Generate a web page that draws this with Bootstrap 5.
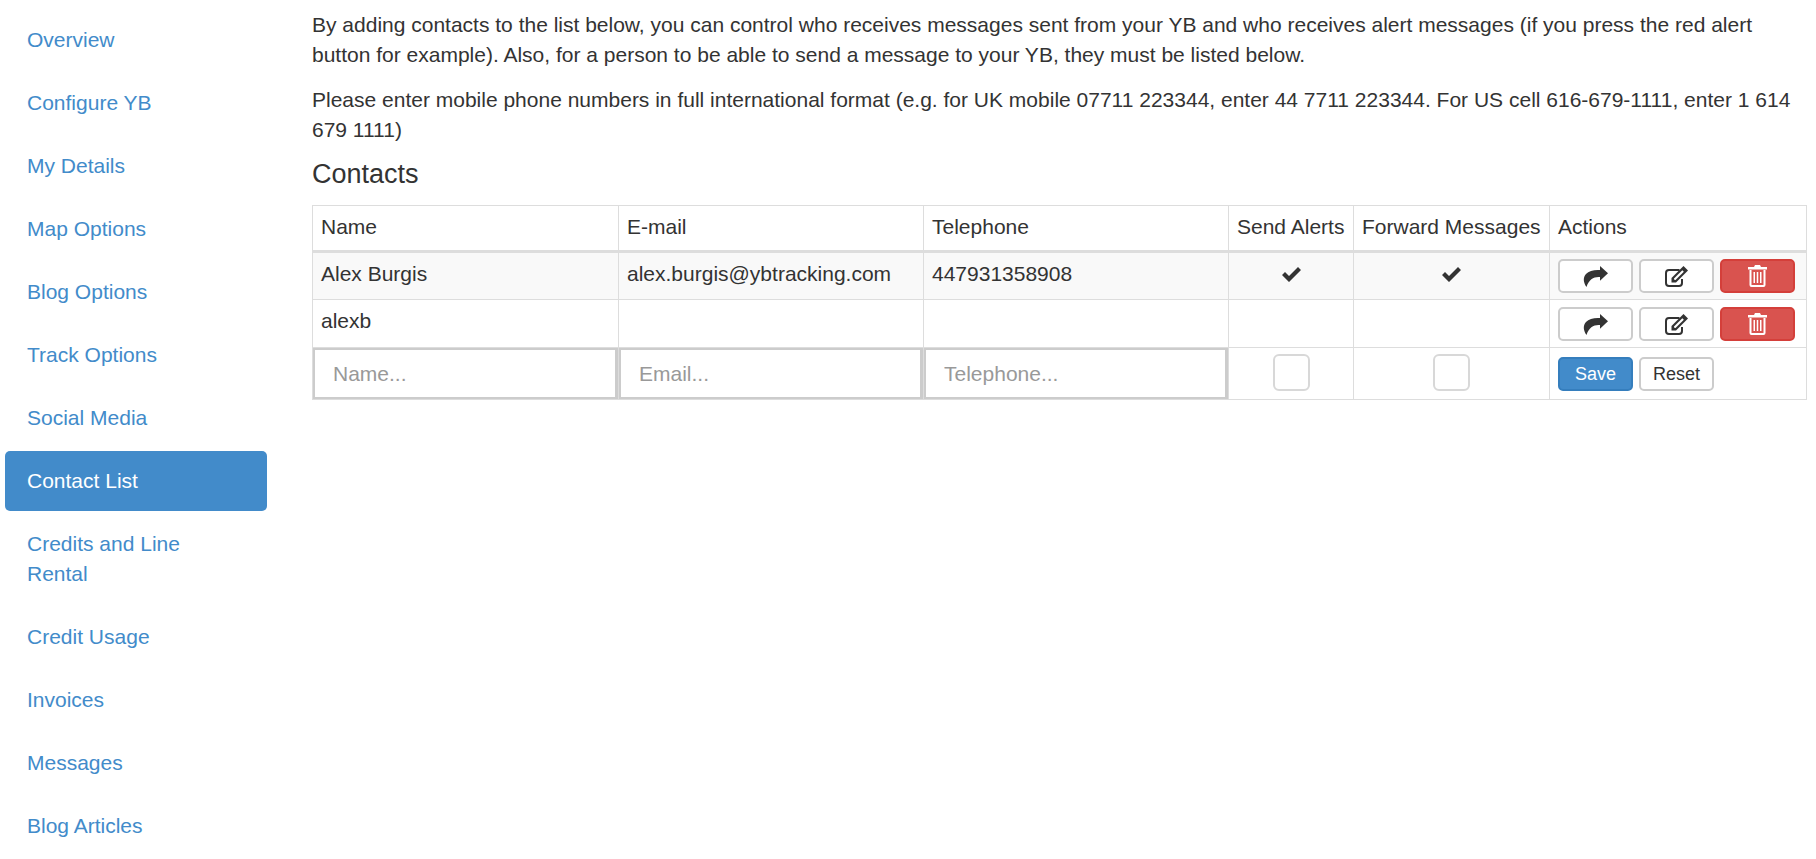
<!doctype html>
<html lang="en">
<head>
<meta charset="utf-8">
<title>Contact List</title>
<link rel="stylesheet" href="https://cdn.jsdelivr.net/npm/bootstrap@5.3.0/dist/css/bootstrap.min.css">
<style>
html,body{height:859px;overflow:hidden}
body{font-family:"Liberation Sans",Arial,sans-serif;font-size:21px;line-height:30px;color:#333;background:#fff}
.shell{display:flex;align-items:flex-start;padding:0 10px 0 5px}
.side{width:262px;flex:none;padding-top:10px}
.side .nav-link{color:#428bca;font-size:21px;line-height:30px;padding:15px 22px;border-radius:5px;margin-bottom:3px}
.side .nav-link.active{background:#428bca;color:#fff}
.content{margin-left:45px;width:1494px;padding-top:10px}
.content p{margin:0 0 15px}
.content h3{font-size:27px;line-height:30px;font-weight:400;margin:-1px 0 16px}
.ctable{width:1494px;table-layout:fixed;border-collapse:collapse;margin:0;color:#333}
.ctable th,.ctable td{border:1px solid #ddd;padding:9px 8px 6px;font-weight:400;line-height:24px;background:transparent;box-shadow:none;white-space:nowrap;vertical-align:top}
.ctable thead th{height:46px;border-bottom:3px solid #ddd;padding:9px 8px}
.ctable tbody tr.rowa td{height:48px;background:#f9f9f9}
.ctable tbody tr.rowb td{height:48px}
.ctable td.mid{text-align:center;padding-top:8px}
.ctable td.mid svg{vertical-align:middle}
.ctable td.acts{padding:6px 8px}
.ctable td.acts.low{padding-top:7px;vertical-align:middle}
.ctable td.inp{padding:0}
.ctable td.frm{padding:4px 8px 7px;vertical-align:middle}
.fld{display:block;width:calc(100% + 1px);height:53px;margin:-1px 0 -1px -1px;border:3px solid #ccc;padding:0 18px;font-size:21px;color:#333;outline:0;background:#fff}
.fld::placeholder{color:#999;opacity:1}
.tick{display:block;width:37px;height:37px;margin:0 auto;border:2px solid #d8d8d8;border-radius:6px;background:#fff;appearance:none}
.bt{width:75px;height:34px;padding:0;border:2px solid #ccc;border-radius:5px;background:#fff;color:#333;font-size:18px;line-height:28px;display:inline-flex;align-items:center;justify-content:center}
.bt.del{background:#d9534f;border-color:#d43f3a}
.bt.sv{background:#428bca;border-color:#357ebd;color:#fff}
.acts-row{display:flex;gap:6px}
.c1{width:306px}.c2{width:305px}.c3{width:305px}.c4{width:125px}.c5{width:196px}.c6{width:257px}
</style>
</head>
<body>
<div class="shell">
<nav class="side nav flex-column">
<a class="nav-link" href="#">Overview</a>
<a class="nav-link" href="#">Configure YB</a>
<a class="nav-link" href="#">My Details</a>
<a class="nav-link" href="#">Map Options</a>
<a class="nav-link" href="#">Blog Options</a>
<a class="nav-link" href="#">Track Options</a>
<a class="nav-link" href="#">Social Media</a>
<a class="nav-link active" href="#">Contact List</a>
<a class="nav-link" href="#">Credits and Line<br>Rental</a>
<a class="nav-link" href="#">Credit Usage</a>
<a class="nav-link" href="#">Invoices</a>
<a class="nav-link" href="#">Messages</a>
<a class="nav-link" href="#">Blog Articles</a>
</nav>
<main class="content">
<p>By adding contacts to the list below, you can control who receives messages sent from your YB and who receives alert messages (if you press the red alert button for example). Also, for a person to be able to send a message to your YB, they must be listed below.</p>
<p>Please enter mobile phone numbers in full international format (e.g. for UK mobile 07711 223344, enter 44 7711 223344. For US cell 616-679-1111, enter 1 614 679 1111)</p>
<h3>Contacts</h3>
<table class="ctable">
<colgroup><col class="c1"><col class="c2"><col class="c3"><col class="c4"><col class="c5"><col class="c6"></colgroup>
<thead><tr><th>Name</th><th>E-mail</th><th>Telephone</th><th>Send Alerts</th><th>Forward Messages</th><th>Actions</th></tr></thead>
<tbody>
<tr class="rowa"><td>Alex Burgis</td><td>alex.burgis@ybtracking.com</td><td>447931358908</td>
<td class="mid"><svg width="19" height="15" viewBox="0 0 19 15"><path fill="#333" d="M0 8 3 5 7 9 16 0 19 3 7 15z"/></svg></td>
<td class="mid"><svg width="19" height="15" viewBox="0 0 19 15"><path fill="#333" d="M0 8 3 5 7 9 16 0 19 3 7 15z"/></svg></td>
<td class="acts"><div class="acts-row">
<button class="bt" type="button"><svg width="25" height="21" viewBox="0 0 25 21"><path fill="#333" d="M17 0 25 7.300 17 14.700V11C11 10.500 6 13 3.500 21 0 16 0 11.500 3 8 6 4.500 11 3.700 17 4z"/></svg></button>
<button class="bt" type="button"><svg width="23" height="21" viewBox="0 0 23 21"><path fill="none" stroke="#333" stroke-width="2" d="M14.500 4H4A3 3 0 0 0 1 7V17A3 3 0 0 0 4 20H14A3 3 0 0 0 17 17V13"/><path fill="#333" d="M18.500 0 23 4.500 11 16.500H6.500V12z"/><path fill="#fff" d="M17.300 4.200 18.800 5.700 10.500 14H9.800L9 13.200V12.500z"/></svg></button>
<button class="bt del" type="button"><svg width="19" height="22" viewBox="0 0 19 22"><path fill="#fff" d="M7 0H12L13 2H19V4.500H0V2H6z"/><path fill="none" stroke="#fff" stroke-width="2" d="M2.500 5V20A1 1 0 0 0 3.500 21H15.500A1 1 0 0 0 16.500 20V5"/><path fill="#fff" d="M5.500 7H7V18H5.500zM8.750 7H10.250V18H8.750zM12 7H13.500V18H12z"/></svg></button>
</div></td></tr>
<tr class="rowb"><td>alexb</td><td></td><td></td><td></td><td></td>
<td class="acts low"><div class="acts-row">
<button class="bt" type="button"><svg width="25" height="21" viewBox="0 0 25 21"><path fill="#333" d="M17 0 25 7.300 17 14.700V11C11 10.500 6 13 3.500 21 0 16 0 11.500 3 8 6 4.500 11 3.700 17 4z"/></svg></button>
<button class="bt" type="button"><svg width="23" height="21" viewBox="0 0 23 21"><path fill="none" stroke="#333" stroke-width="2" d="M14.500 4H4A3 3 0 0 0 1 7V17A3 3 0 0 0 4 20H14A3 3 0 0 0 17 17V13"/><path fill="#333" d="M18.500 0 23 4.500 11 16.500H6.500V12z"/><path fill="#fff" d="M17.300 4.200 18.800 5.700 10.500 14H9.800L9 13.200V12.500z"/></svg></button>
<button class="bt del" type="button"><svg width="19" height="22" viewBox="0 0 19 22"><path fill="#fff" d="M7 0H12L13 2H19V4.500H0V2H6z"/><path fill="none" stroke="#fff" stroke-width="2" d="M2.500 5V20A1 1 0 0 0 3.500 21H15.500A1 1 0 0 0 16.500 20V5"/><path fill="#fff" d="M5.500 7H7V18H5.500zM8.750 7H10.250V18H8.750zM12 7H13.500V18H12z"/></svg></button>
</div></td></tr>
<tr><td class="inp"><input class="fld" placeholder="Name..."></td><td class="inp"><input class="fld" placeholder="Email..."></td><td class="inp"><input class="fld" placeholder="Telephone..."></td>
<td class="mid frm"><input class="tick" type="checkbox"></td><td class="mid frm"><input class="tick" type="checkbox"></td>
<td class="acts low"><div class="acts-row"><button class="bt sv" type="button">Save</button><button class="bt" type="button">Reset</button></div></td></tr>
</tbody>
</table>
</main>
</div>
<script src="https://cdn.jsdelivr.net/npm/bootstrap@5.3.0/dist/js/bootstrap.bundle.min.js"></script>
</body>
</html>
